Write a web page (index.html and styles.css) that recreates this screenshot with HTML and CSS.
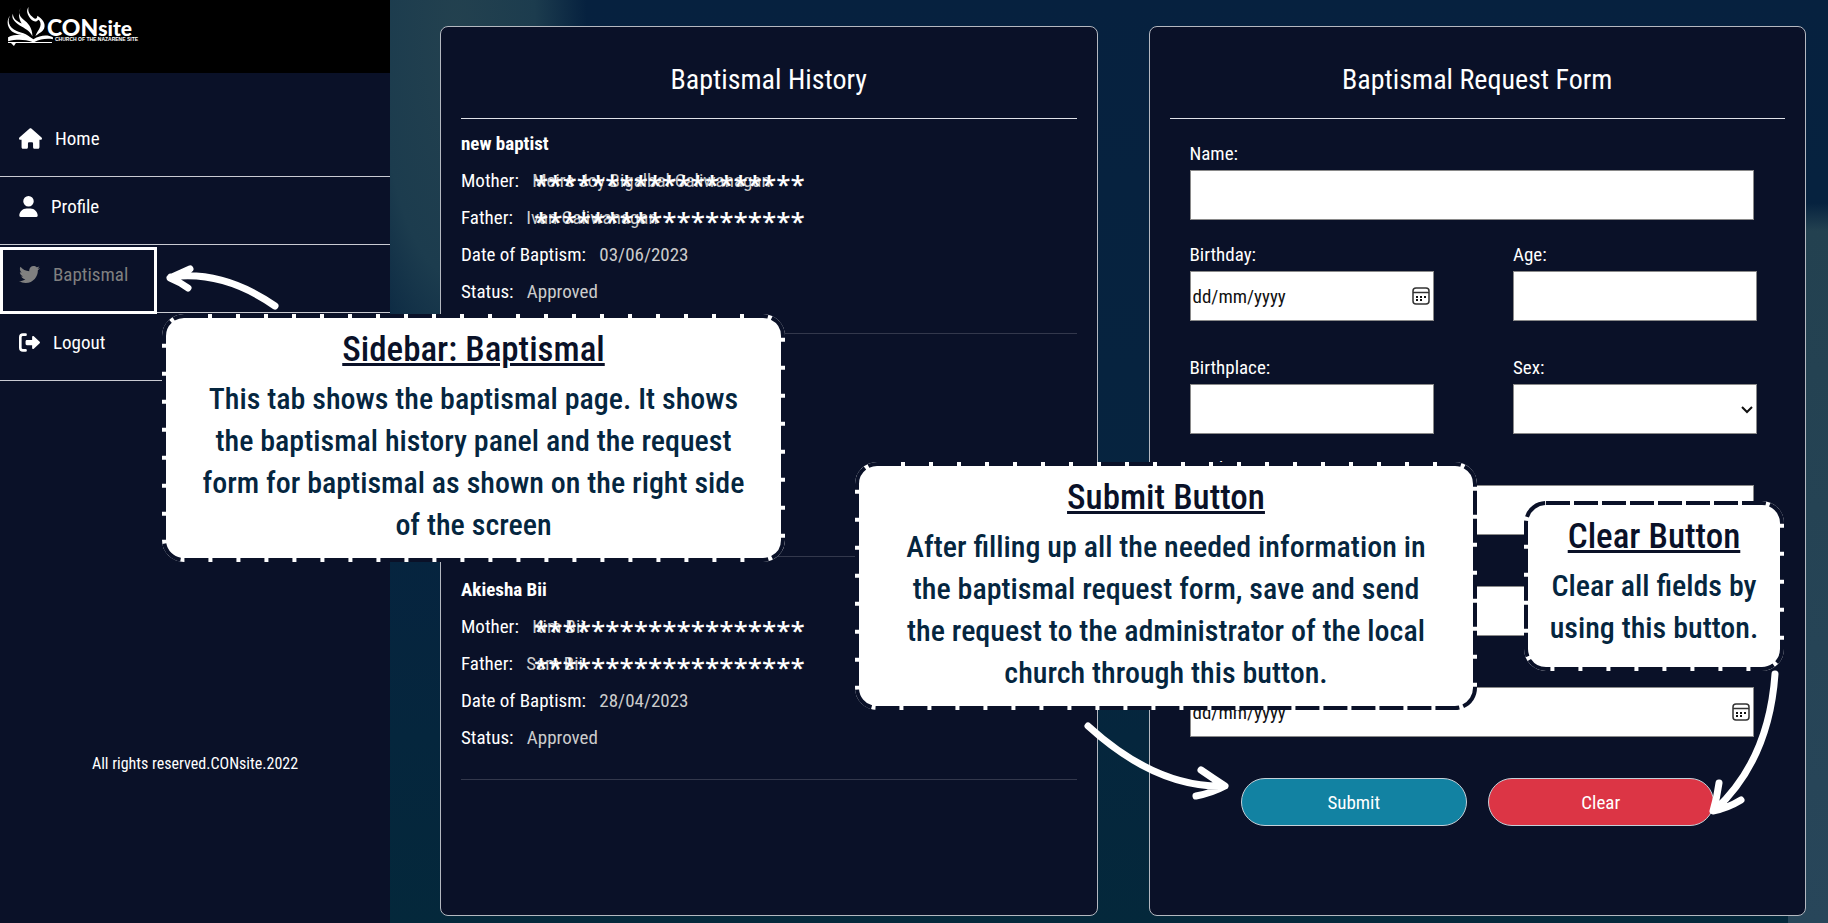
FILE: index.html
```html
<!DOCTYPE html>
<html lang="en">
<head>
<meta charset="utf-8">
<title>CONsite - Baptismal</title>
<link rel="stylesheet" href="styles.css">
</head>
<body>
<div class="app">
  <aside class="sidebar">
    <header class="brand">
      <svg class="brand-mark" viewBox="0 0 48 40" aria-hidden="true">
        <g fill="#fff">
          <path d="M14 1C11 5 12 9 17 13c4 3 9 8 9 17C23 24 18 22 13 19 7 15 4 11 6 7c0 5 4 8 9 10-3-5-4-11-1-16z"/>
          <path d="M22 0c-1 5 1 8 5 11 2 2 4 1 4-2 5 3 9 8 7 13-2 4-6 5-9 8 1-4 4-6 5-10 1-3 0-6-2-7-2 3-5 2-8-1-3-4-5-8-2-12z"/>
          <path d="M3 9c-3 5-1 11 4 14 6 4 14 3 18 10C19 28 11 29 5 25 0 21-1 14 3 9z"/>
          <path d="M1 31c9-4 19-3 26 2 7-4 14-5 20-2v2c-7-1-13 0-19 3h-2C18 33 10 33 1 35z"/>
          <path d="M1 36h45v1H9l-2 3-3-3H1z"/>
        </g>
      </svg>
      <div class="brand-text">
        <span class="brand-name">CON<span class="brand-small">site</span></span>
        <span class="brand-tag">CHURCH OF THE NAZARENE SITE</span>
      </div>
    </header>
    <nav class="nav">
      <a class="nav-item" href="#home">
        <svg class="icon-home" viewBox="0 0 576 512" aria-hidden="true"><path fill="currentColor" d="M575.800 255.500c0 18-15 32.100-32 32.100h-32l.7 160.200c0 2.700-.2 5.400-.5 8.100V472c0 22.100-17.900 40-40 40H392c-22.100 0-40-17.900-40-40v-88c0-17.700-14.300-32-32-32h-64c-17.700 0-32 14.300-32 32v88c0 22.100-17.900 40-40 40h-80c-22.100 0-40-17.900-40-40V287.600H32c-18 0-32-14-32-32.100 0-9 3-17 10-24L266.400 8c7-7 15-8 22-8s15 2 21 7l255.400 224.500c8 7 12 15 11 24z"/></svg>
        Home</a>
      <a class="nav-item" href="#profile">
        <svg class="icon-user" viewBox="0 0 448 512" aria-hidden="true"><path fill="currentColor" d="M224 256a128 128 0 1 0 0-256 128 128 0 1 0 0 256zm-45.700 48C79.800 304 0 383.800 0 482.300 0 498.700 13.300 512 29.700 512h388.600c16.400 0 29.700-13.300 29.700-29.700C448 383.800 368.200 304 269.700 304z"/></svg>
        Profile</a>
      <a class="nav-item nav-current" href="#baptismal">
        <svg class="icon-bird" viewBox="0 0 512 512" aria-hidden="true"><path fill="currentColor" d="M459.370 151.716c.325 4.548.325 9.097.325 13.645 0 138.720-105.583 298.558-298.558 298.558-59.452 0-114.680-17.219-161.137-47.106 8.447.974 16.568 1.299 25.340 1.299 49.055 0 94.213-16.568 130.274-44.832-46.132-.975-84.792-31.188-98.112-72.772 6.498.974 12.995 1.624 19.818 1.624 9.421 0 18.843-1.300 27.614-3.573-48.081-9.747-84.143-51.980-84.143-102.985v-1.299c13.969 7.797 30.214 12.670 47.431 13.319-28.264-18.843-46.781-51.005-46.781-87.391 0-19.492 5.197-37.360 14.294-52.954 51.655 63.675 129.300 105.258 216.365 109.807-1.624-7.797-2.599-15.918-2.599-24.040 0-57.828 46.782-104.934 104.934-104.934 30.213 0 57.502 12.670 76.670 33.137 23.715-4.548 46.456-13.320 66.599-25.340-7.798 24.366-24.366 44.833-46.132 57.827 21.117-2.273 41.584-8.122 60.426-16.243-14.292 20.791-32.161 39.308-52.628 54.253z"/></svg>
        Baptismal</a>
      <a class="nav-item" href="#logout">
        <svg class="icon-logout" viewBox="0 0 512 512" aria-hidden="true"><path fill="none" stroke="currentColor" stroke-width="64" stroke-linecap="round" stroke-linejoin="round" d="M160 448H96c-35 0-64-29-64-64V128c0-35 29-64 64-64h64"/><path fill="currentColor" d="M504 239 361 105c-16-15-41-4-41 18v69H192c-18 0-32 14-32 32v64c0 18 14 32 32 32h128v69c0 22 25 33 41 18l143-134c10-10 10-24 0-34z"/></svg>
        Logout</a>
    </nav>
    <footer class="rights">All rights reserved.CONsite.2022</footer>
  </aside>

  <main class="content">
    <section class="panel">
      <h1 class="panel-title">Baptismal History</h1>
      <article class="entry">
        <h2 class="entry-name">new baptist</h2>
        <p class="entry-row">Mother: <span class="value">Meire Joy Bigalbal-Caliwanagan</span><span class="mask">*******************</span></p>
        <p class="entry-row">Father: <span class="value">Ivan Caliwanagan</span><span class="mask">*******************</span></p>
        <p class="entry-row">Date of Baptism: <span class="value">03/06/2023</span></p>
        <p class="entry-row">Status: <span class="value">Approved</span></p>
      </article>
      <article class="entry"></article>
      <article class="entry">
        <h2 class="entry-name">Akiesha Bii</h2>
        <p class="entry-row">Mother: <span class="value">Kim Bii</span><span class="mask">*******************</span></p>
        <p class="entry-row">Father: <span class="value">Sam Bii</span><span class="mask">*******************</span></p>
        <p class="entry-row">Date of Baptism: <span class="value">28/04/2023</span></p>
        <p class="entry-row">Status: <span class="value">Approved</span></p>
      </article>
    </section>

    <section class="panel">
      <h1 class="panel-title">Baptismal Request Form</h1>
      <form class="form">
        <div class="field wide"><label for="name">Name:</label><input id="name" type="text"></div>
        <div class="field"><label for="birthday">Birthday:</label>
          <div class="date"><input id="birthday" type="text" placeholder="dd/mm/yyyy">
            <button class="picker" type="button" aria-label="Pick birthday"><svg viewBox="0 0 18 18" aria-hidden="true"><rect x="1" y="1" width="16" height="16" rx="3" fill="none" stroke="#333" stroke-width="1.500"/><path d="M1 5.500h16" stroke="#333" stroke-width="1.500"/><path d="M4 9h2v2H4zm4 0h2v2H8zm4 0h2v2h-2zM4 12h2v2H4zm4 0h2v2H8z" fill="#111"/></svg></button></div></div>
        <div class="field"><label for="age">Age:</label><input id="age" type="text"></div>
        <div class="field spaced"><label for="birthplace">Birthplace:</label><input id="birthplace" type="text"></div>
        <div class="field spaced"><label for="sex">Sex:</label>
          <div class="choice"><select id="sex"><option></option></select>
            <svg class="chevron" viewBox="0 0 12 8" aria-hidden="true"><path d="M1 1l5 5 5-5" fill="none" stroke="#111" stroke-width="2"/></svg></div></div>
        <div class="field wide"><label for="mother">Mother:</label><input id="mother" type="text"></div>
        <div class="field wide"><label for="father">Father:</label><input id="father" type="text"></div>
        <div class="field wide"><label for="schedule">Date of Baptism:</label>
          <div class="date"><input id="schedule" type="text" placeholder="dd/mm/yyyy">
            <button class="picker" type="button" aria-label="Pick date of baptism"><svg viewBox="0 0 18 18" aria-hidden="true"><rect x="1" y="1" width="16" height="16" rx="3" fill="none" stroke="#333" stroke-width="1.500"/><path d="M1 5.500h16" stroke="#333" stroke-width="1.500"/><path d="M4 9h2v2H4zm4 0h2v2H8zm4 0h2v2h-2zM4 12h2v2H4zm4 0h2v2H8z" fill="#111"/></svg></button></div></div>
        <div class="actions">
          <button class="btn btn-submit" type="submit">Submit</button>
          <button class="btn btn-clear" type="reset">Clear</button>
        </div>
      </form>
    </section>
  </main>

  <div class="highlight"></div>
  <div class="callout callout-sidebar">
    <svg class="stitch" aria-hidden="true"><rect/></svg>
    <h2>Sidebar: Baptismal</h2>
    <p>This tab shows the baptismal page. It shows<br>the baptismal history panel and the request<br>form for baptismal as shown on the right side<br>of the screen</p>
  </div>
  <div class="callout callout-submit">
    <svg class="stitch" aria-hidden="true"><rect/></svg>
    <h2>Submit Button</h2>
    <p>After filling up all the needed information in<br>the baptismal request form, save and send<br>the request to the administrator of the local<br>church through this button.</p>
  </div>
  <div class="callout callout-clear">
    <svg class="stitch" aria-hidden="true"><rect/></svg>
    <h2>Clear Button</h2>
    <p>Clear all fields by<br>using this button.</p>
  </div>
  <svg class="arrow arrow-sidebar" viewBox="0 0 116 48" aria-hidden="true"><path d="M109 41Q57 5 5 12M24 4Q13 9 4 13Q14 17 22 23"/></svg>
  <svg class="arrow arrow-submit" viewBox="0 0 148 82" aria-hidden="true"><path d="M6 6Q74 68 142 66M119 50Q132 59 143 66Q130 73 114 76"/></svg>
  <svg class="arrow arrow-clear" viewBox="0 0 74 152" aria-hidden="true"><path d="M66 6Q60 92 6 142M10 115Q8 130 4 143Q19 140 32 132"/></svg>
</div>
</body>
</html>
```
FILE: styles.css
```css
* { box-sizing: border-box; }

body {
  margin: 0;
  font-family: "Roboto Condensed", "Open Sans Condensed", "Noto Sans CJK SC", sans-serif;
  font-size: 19px;
  color: #fff;
}

h1, h2, p { margin: 0; font-weight: 400; }

.app {
  position: relative;
  display: flex;
  min-height: 100vh;
  overflow: hidden;
  background:
    radial-gradient(ellipse 130px 400px at 25% 4%, #23414f, #1c3c4e 60%, transparent),
    linear-gradient(transparent 22%, #234150 25%, #28465a) right / 40px 100% no-repeat,
    linear-gradient(#06213f, #06243f 60%, #04283b);
}

.sidebar {
  display: flex;
  flex-direction: column;
  width: 390px;
  background: #0a1128;
}

.brand {
  display: flex;
  height: 73px;
  padding: 7px 7px 0;
  background: #000;
}
.brand-mark { width: 47px; height: 39px; }
.brand-text {
  display: flex;
  flex-direction: column;
  margin-left: -7px;
  padding-top: 9px;
}
.brand-name { font: 900 23px/22px Lato, sans-serif; }
.brand-small { font-size: 21px; }
.brand-tag {
  margin-top: -3px;
  padding-left: 8px;
  font: 700 5px/6px "Liberation Sans", sans-serif;
}

.nav { padding-top: 36px; }
.nav-item {
  display: flex;
  align-items: center;
  gap: 13px;
  height: 68px;
  padding: 0 19px 8px;
  border-bottom: 1px solid #c9cbd2;
  color: #fff;
  text-decoration: none;
}
.nav-current { color: #808080; }
.icon-home { width: 23px; height: 21px; }
.icon-user { width: 19px; height: 21px; }
.icon-bird, .icon-logout { width: 21px; height: 21px; }

.rights {
  margin-top: auto;
  padding-bottom: 148px;
  font-size: 16px;
  line-height: 22px;
  text-align: center;
}

.content {
  flex: 1;
  display: grid;
  grid-template-columns: 1fr 1fr;
  gap: 51px;
  padding: 26px 22px 7px 50px;
}
.panel {
  padding: 24px 20px;
  border: 1px solid #b4b8c0;
  border-radius: 8px;
  background: #0a1128;
}
.panel-title {
  height: 68px;
  border-bottom: 1px solid #e0e2e8;
  font-size: 28px;
  line-height: 58px;
  text-align: center;
}

.entry {
  min-height: 223px;
  padding: 14px 0 23px;
  border-bottom: 1px solid #33384c;
  line-height: 37px;
}
.panel-title + .entry { min-height: 215px; padding-top: 6px; }
.entry-name { font-size: 19px; font-weight: 700; }
.entry-row { position: relative; }
.value { margin-left: 9px; color: #ccc; }
.mask {
  position: absolute;
  left: 73px;
  top: 4px;
  font: 600 26px/37px "Open Sans", sans-serif;
}

.form {
  display: grid;
  grid-template-columns: 244px 244px;
  justify-content: space-between;
  row-gap: 19px;
  padding: 19px 28px 0 20px;
}
.field label { display: block; height: 32px; line-height: 32px; }
.wide { grid-column: 1 / -1; padding-right: 3px; }
.spaced { margin-top: 12px; }
.field input, .field select {
  display: block;
  width: 100%;
  height: 50px;
  padding: 0 2px;
  border: 1px solid #8a8a8a;
  border-radius: 0;
  background: #fff;
  font: inherit;
  color: #111;
  appearance: none;
}
.field input::placeholder { color: #111; opacity: 1; }
.date, .choice { position: relative; }
.picker {
  position: absolute;
  right: 4px;
  top: 16px;
  width: 18px;
  height: 18px;
  padding: 0;
  border: 0;
  background: none;
}
.picker svg { display: block; width: 18px; height: 18px; }
.chevron { position: absolute; right: 4px; top: 22px; width: 12px; height: 8px; }

.actions {
  grid-column: 1 / -1;
  display: flex;
  justify-content: center;
  gap: 21px;
  padding: 22px 0 0 8px;
}
.btn {
  width: 226px;
  height: 48px;
  border: 1px solid #c4d0d8;
  border-radius: 24px;
  font: inherit;
  color: #fff;
}
.btn-submit { background: #1282a2; }
.btn-clear { background: #dc3545; }

/* Tutorial overlay */
.highlight {
  position: absolute;
  left: 0;
  top: 247px;
  width: 157px;
  height: 67px;
  border: 3px solid #fff;
}
.callout {
  position: absolute;
  padding: 14px 0;
  border-radius: 22px;
  background: #fff;
  color: #05263f;
  text-align: center;
  white-space: nowrap;
}
.callout h2 {
  font-size: 35px;
  font-weight: 500;
  line-height: 44px;
  color: #0a1128;
  text-decoration: underline;
  text-decoration-thickness: 3px;
}
.callout p { font-size: 30px; font-weight: 500; line-height: 42px; padding-top: 6px; }
.callout-sidebar { left: 162px; top: 314px; width: 623px; height: 248px; }
.callout-submit { left: 855px; top: 462px; width: 622px; height: 248px; }
.callout-clear { left: 1524px; top: 501px; width: 260px; height: 170px; }
.stitch { position: absolute; left: 0; top: 0; width: 100%; height: 100%; }
.stitch rect {
  x: 2px;
  y: 2px;
  width: calc(100% - 4px);
  height: calc(100% - 4px);
  rx: 20px;
  fill: none;
  stroke: #0a1128;
  stroke-width: 4px;
  stroke-dasharray: 24 4;
}
.arrow {
  position: absolute;
  fill: none;
  stroke: #fff;
  stroke-width: 7px;
  stroke-linecap: round;
  stroke-linejoin: round;
}
.arrow-sidebar { left: 166px; top: 265px; width: 116px; height: 48px; }
.arrow-submit { left: 1082px; top: 720px; width: 148px; height: 82px; }
.arrow-clear { left: 1709px; top: 668px; width: 74px; height: 152px; }
```
